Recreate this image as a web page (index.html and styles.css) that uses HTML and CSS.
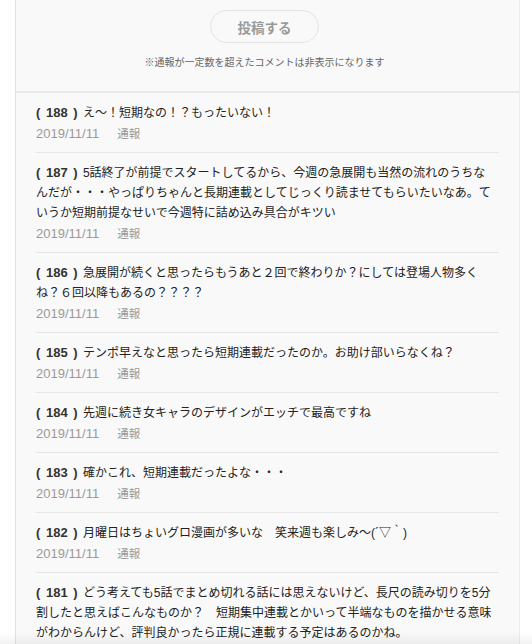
FILE: index.html
```html
<!DOCTYPE html>
<html lang="ja">
<head>
    <meta charset="UTF-8">
    <title>コメント</title>
    <link rel="stylesheet" href="styles.css">
</head>
<body>
    <div class="comments">
        <div class="post-area">
            <button class="post-btn">投稿する</button>
            <p class="notice">※通報が一定数を超えたコメントは非表示になります</p>
        </div>

        <ul class="comment-list">
            <li class="comment">
                <p class="comment-body"><span class="comment-no">( 188 )</span> え〜！短期なの！？もったいない！</p>
                <div class="comment-meta"><span class="date">2019/11/11</span><a class="report">通報</a></div>
            </li>
            <li class="comment">
                <p class="comment-body"><span class="comment-no">( 187 )</span> 5話終了が前提でスタートしてるから、今週の急展開も当然の流れのうちなんだが・・・やっぱりちゃんと長期連載としてじっくり読ませてもらいたいなあ。ていうか短期前提なせいで今週特に詰め込み具合がキツい</p>
                <div class="comment-meta"><span class="date">2019/11/11</span><a class="report">通報</a></div>
            </li>
            <li class="comment">
                <p class="comment-body"><span class="comment-no">( 186 )</span> 急展開が続くと思ったらもうあと２回で終わりか？にしては登場人物多くね？６回以降もあるの？？？？</p>
                <div class="comment-meta"><span class="date">2019/11/11</span><a class="report">通報</a></div>
            </li>
            <li class="comment">
                <p class="comment-body"><span class="comment-no">( 185 )</span> テンポ早えなと思ったら短期連載だったのか。お助け部いらなくね？</p>
                <div class="comment-meta"><span class="date">2019/11/11</span><a class="report">通報</a></div>
            </li>
            <li class="comment">
                <p class="comment-body"><span class="comment-no">( 184 )</span> 先週に続き女キャラのデザインがエッチで最高ですね</p>
                <div class="comment-meta"><span class="date">2019/11/11</span><a class="report">通報</a></div>
            </li>
            <li class="comment">
                <p class="comment-body"><span class="comment-no">( 183 )</span> 確かこれ、短期連載だったよな・・・</p>
                <div class="comment-meta"><span class="date">2019/11/11</span><a class="report">通報</a></div>
            </li>
            <li class="comment">
                <p class="comment-body"><span class="comment-no">( 182 )</span> 月曜日はちょいグロ漫画が多いな　笑来週も楽しみ〜(´▽｀)</p>
                <div class="comment-meta"><span class="date">2019/11/11</span><a class="report">通報</a></div>
            </li>
            <li class="comment">
                <p class="comment-body"><span class="comment-no">( 181 )</span> どう考えても5話でまとめ切れる話には思えないけど、長尺の読み切りを5分割したと思えばこんなものか？　短期集中連載とかいって半端なものを描かせる意味がわからんけど、評判良かったら正規に連載する予定はあるのかね。</p>
                <div class="comment-meta"><span class="date">2019/11/11</span><a class="report">通報</a></div>
            </li>
        </ul>
    </div>
    <div class="bottom-fade"></div>
</body>
</html>
```

FILE: styles.css
```css
body {
    margin: 0;
    background-color: #fff;
    font-family: "Liberation Sans", "Noto Sans CJK JP", sans-serif;
    color: #333;
}
.comments {
    margin-left: 15px;
    width: 503px;
    min-height: 100vh;
    background-color: #f9f9f9;
    border-left: 1px solid #e2e2e2;
    border-right: 1px solid #ededed;
}
.post-area {
    padding: 10px 6px 21px 0;
    text-align: center;
    border-bottom: 2px solid #e8e8e8;
}
.post-btn {
    width: 109px;
    height: 33px;
    border: 1px solid #e4e4e4;
    border-radius: 17px;
    background-color: #f9f9f9;
    color: #9a9a9a;
    font-family: "Liberation Sans", "Noto Sans CJK JP", sans-serif;
    font-size: 13.5px;
    font-weight: bold;
    padding: 0;
}
.notice {
    margin: 13px 0 0;
    font-size: 10px;
    line-height: 14px;
    color: #666;
}
.comment-list {
    list-style: none;
    margin: 0 20px;
    padding: 0;
}
.comment {
    padding: 10px 0 9px;
    border-bottom: 1px solid #e6e6e6;
}
.comment-body {
    margin: 0;
    padding-right: 4px;
    font-size: 12px;
    line-height: 20px;
    color: #222;
}
.comment-no {
    font-size: 13px;
    line-height: 1;
    font-weight: bold;
    word-spacing: 2px;
    margin-right: 2px;
    color: #333;
}
.comment-meta {
    display: flex;
    align-items: center;
    height: 20px;
    font-size: 13px;
    color: #999;
}
.report {
    margin-left: 18px;
    font-size: 11.5px;
    color: #999;
}
.bottom-fade {
    position: fixed;
    left: 0;
    right: 0;
    bottom: 0;
    height: 12px;
    background: linear-gradient(rgba(0,0,0,0), rgba(0,0,0,0.05));
    pointer-events: none;
}
```
